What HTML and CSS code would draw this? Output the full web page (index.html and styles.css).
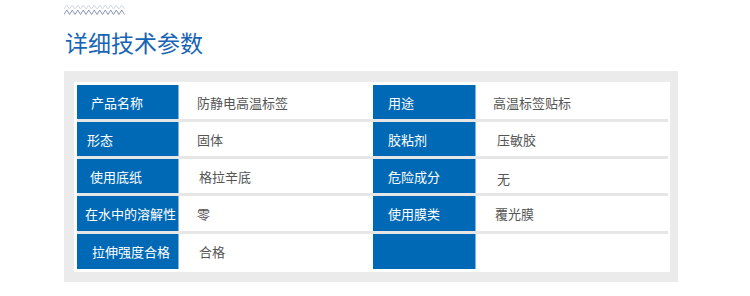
FILE: index.html
```html
<!DOCTYPE html>
<html lang="zh-CN">
<head>
<meta charset="utf-8">
<title>详细技术参数</title>
<link rel="stylesheet" href="styles.css">
</head>
<body>
<div class="wrap">
  <svg class="zigzag" width="62" height="13" viewBox="0 0 62 13" aria-hidden="true">
    <polyline class="zz-top" points="0,6 2.75,2 5.5,6 8.25,2 11,6 13.75,2 16.5,6 19.25,2 22,6 24.75,2 27.5,6 30.25,2 33,6 35.75,2 38.5,6 41.25,2 44,6 46.75,2 49.5,6 52.25,2 55,6 57.75,2 60.5,6"/>
    <polyline class="zz-bot" points="0,11.5 2.75,7 5.5,11.5 8.25,7 11,11.5 13.75,7 16.5,11.5 19.25,7 22,11.5 24.75,7 27.5,11.5 30.25,7 33,11.5 35.75,7 38.5,11.5 41.25,7 44,11.5 46.75,7 49.5,11.5 52.25,7 55,11.5 57.75,7 60.5,11.5"/>
  </svg>
  <h1 class="title">详细技术参数</h1>
  <div class="panel">
    <div class="table">
      <div class="lbl p14">产品名称</div>
      <div class="val">防静电高温标签</div>
      <div class="lbl">用途</div>
      <div class="val r17">高温标签贴标</div>

      <div class="lbl p10">形态</div>
      <div class="val">固体</div>
      <div class="lbl">胶粘剂</div>
      <div class="val r21">压敏胶</div>

      <div class="lbl p13">使用底纸</div>
      <div class="val v20">格拉辛底</div>
      <div class="lbl">危险成分</div>
      <div class="val r21 low">无</div>

      <div class="lbl p8">在水中的溶解性</div>
      <div class="val">零</div>
      <div class="lbl">使用膜类</div>
      <div class="val r19">覆光膜</div>

      <div class="lbl p15">拉伸强度合格</div>
      <div class="val v20">合格</div>
      <div class="lbl"></div>
      <div class="val"></div>
    </div>
  </div>
</div>
</body>
</html>
```
FILE: styles.css
```css
html, body {
  margin: 0;
  padding: 0;
  background: #ffffff;
}

body {
  font-family: "Noto Sans CJK SC", "Noto Sans", sans-serif;
  width: 750px;
  height: 296px;
  overflow: hidden;
}

.wrap {
  padding-left: 64px;
  padding-top: 3px;
}

.zigzag {
  display: block;
}

.zz-top {
  fill: none;
  stroke: #d3d8e5;
  stroke-width: 1;
}

.zz-bot {
  fill: none;
  stroke: #8a97b8;
  stroke-width: 1;
}

.title {
  margin: 13px 0 0 1px;
  font-size: 23px;
  line-height: 26px;
  font-weight: 400;
  color: #1864b4;
}

.panel {
  margin-top: 16px;
  width: 614px;
  background: #ebebeb;
  padding: 11px 0 10px 10px;
  box-sizing: border-box;
}

.table {
  display: grid;
  grid-template-columns: 102px 194px 103px 192px;
  grid-template-rows: 34px 34px 34px 35px 35px;
  row-gap: 3px;
  width: 591px;
  border: 3px solid #ffffff;
  border-right-width: 2px;
  background: #e6e6e6;
}

.lbl {
  background: #0069b5;
  color: #ffffff;
  font-size: 13px;
  display: flex;
  align-items: center;
  padding-left: 15px;
  border-right: 1px solid #7fb3e0;
  box-sizing: border-box;
  white-space: nowrap;
}

.val {
  background: #ffffff;
  color: #555555;
  font-size: 13px;
  display: flex;
  align-items: center;
  padding-left: 18px;
  white-space: nowrap;
}

.p8 { padding-left: 8px; }
.p10 { padding-left: 10px; }
.p13 { padding-left: 13px; }
.p14 { padding-left: 14px; }
.p15 { padding-left: 15px; }
.v20 { padding-left: 20px; }
.r17 { padding-left: 17px; }
.r19 { padding-left: 19px; }
.r21 { padding-left: 21px; }
.low { padding-top: 4px; }
```
